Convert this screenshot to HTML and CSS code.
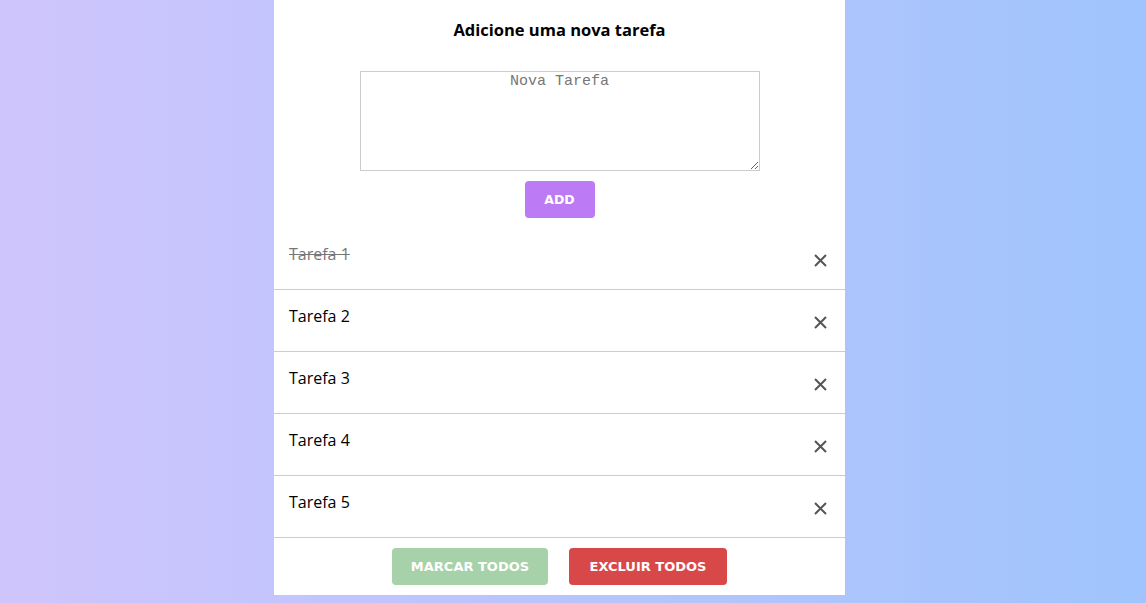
FILE: index.html
```html
<!DOCTYPE html>
<html lang="pt-BR">
<head>
<meta charset="utf-8">
<title>Tarefas</title>
<link rel="stylesheet" href="styles.css">
</head>
<body>
<main class="app">
  <h1 class="title">Adicione uma nova tarefa</h1>
  <div class="form">
    <textarea class="input" placeholder="Nova Tarefa"></textarea>
    <button class="btn btn-add">ADD</button>
  </div>
  <ul class="list">
    <li class="item done"><span class="text">Tarefa 1</span><span class="remove"><svg viewBox="0 0 13 13" width="13" height="13"><path d="M1 1L12 12M12 1L1 12" stroke="#555" stroke-width="2" fill="none"/></svg></span></li>
    <li class="item"><span class="text">Tarefa 2</span><span class="remove"><svg viewBox="0 0 13 13" width="13" height="13"><path d="M1 1L12 12M12 1L1 12" stroke="#555" stroke-width="2" fill="none"/></svg></span></li>
    <li class="item"><span class="text">Tarefa 3</span><span class="remove"><svg viewBox="0 0 13 13" width="13" height="13"><path d="M1 1L12 12M12 1L1 12" stroke="#555" stroke-width="2" fill="none"/></svg></span></li>
    <li class="item"><span class="text">Tarefa 4</span><span class="remove"><svg viewBox="0 0 13 13" width="13" height="13"><path d="M1 1L12 12M12 1L1 12" stroke="#555" stroke-width="2" fill="none"/></svg></span></li>
    <li class="item"><span class="text">Tarefa 5</span><span class="remove"><svg viewBox="0 0 13 13" width="13" height="13"><path d="M1 1L12 12M12 1L1 12" stroke="#555" stroke-width="2" fill="none"/></svg></span></li>
  </ul>
  <div class="actions">
    <button class="btn btn-mark">MARCAR TODOS</button>
    <button class="btn btn-clear">EXCLUIR TODOS</button>
  </div>
</main>
</body>
</html>
```

FILE: styles.css
```css
html, body {
  margin: 0;
  padding: 0;
  height: 100%;
}
body {
  background: linear-gradient(to right, #cfc5fc, #a0c4fd);
  font-family: "Open Sans", "Noto Sans", sans-serif;
  display: flex;
  align-items: flex-start;
}
.app {
  margin-left: 274px;
  width: 571px;
  height: 595px;
  background: #fff;
  box-sizing: border-box;
  padding-top: 19px;
}
.title {
  margin: 0;
  font-size: 16.5px;
  font-weight: 700;
  line-height: 22px;
  text-align: center;
  color: #000;
}
.form {
  display: flex;
  flex-direction: column;
  align-items: center;
  margin-top: 30px;
}
.input {
  width: 400px;
  height: 100px;
  box-sizing: border-box;
  border: 1px solid #ccc;
  padding: 1px 2px 0;
  margin: 0;
  font-family: "Liberation Mono", monospace;
  font-size: 15px;
  text-align: center;
  resize: both;
  outline: none;
}
.input::placeholder {
  color: #777;
}
.btn {
  border: 0;
  border-radius: 4px;
  color: #fff;
  font-family: "DejaVu Sans", Verdana, sans-serif;
  font-weight: 700;
  font-size: 13px;
  height: 37px;
  padding: 0;
  cursor: pointer;
}
.btn-add {
  margin-top: 10px;
  width: 70px;
  background: #bd7af5;
  font-size: 12.5px;
}
.list {
  list-style: none;
  margin: 10px 0 0;
  padding: 0;
}
.item {
  display: flex;
  justify-content: space-between;
  height: 62px;
  box-sizing: border-box;
  border-bottom: 1px solid #ccc;
  padding: 15px 18px 0 15px;
  font-size: 16px;
  line-height: 22px;
  color: #000;
}
.item.done .text {
  color: #777;
  text-decoration: line-through;
}
.remove {
  display: flex;
  margin-top: 11px;
  width: 13px;
  height: 13px;
}
.actions {
  display: flex;
  justify-content: center;
  gap: 21px;
  margin-top: 10px;
}
.btn-mark {
  width: 156px;
  background: #a7d1a8;
}
.btn-clear {
  width: 158px;
  background: #d84848;
}
```
